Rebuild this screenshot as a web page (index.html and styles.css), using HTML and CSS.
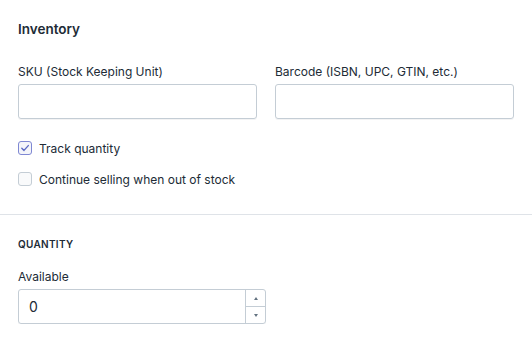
FILE: index.html
```html
<!DOCTYPE html>
<html lang="en">
  <head>
    <meta charset="utf-8" />
    <link rel="stylesheet" href="styles.css">
  </head>
  <body>
    <section class="card">
      <div class="section">
        <h2 class="heading">Inventory</h2>

        <div class="row">
          <label class="field">
            <span class="label">SKU (Stock Keeping Unit)</span>
            <span class="input"></span>
          </label>
          <label class="field">
            <span class="label">Barcode (ISBN, UPC, GTIN, etc.)</span>
            <span class="input"></span>
          </label>
        </div>

        <div class="checks">
          <div class="check">
            <span class="box checked">
              <svg width="10" height="10" viewBox="0 0 10 10">
                <path d="M1.8 5.2 L4 7.4 L8.3 2.6" fill="none" stroke="#5c6ac4" stroke-width="1.4" stroke-linecap="round" stroke-linejoin="round" />
              </svg>
            </span>
            <span class="check-text">Track quantity</span>
          </div>
          <div class="check">
            <span class="box"></span>
            <span class="check-text">Continue selling when out of stock</span>
          </div>
        </div>
      </div>

      <div class="section bottom">
        <h3 class="subheading">Quantity</h3>
        <span class="label">Available</span>
        <div class="number">
          <span class="value">0</span>
          <span class="spinner">
            <span class="arrow up"></span>
            <span class="arrow down"></span>
          </span>
        </div>
      </div>
    </section>
  </body>
</html>
```

FILE: styles.css
```css
body {
  margin: 0;
  background: #fff;
  color: #212b36;
  font-family: Inter, "Noto Sans", sans-serif;
  font-size: 12px;
}

.section {
  padding: 20px 18px 0;
}

.heading {
  margin: 0 0 26px;
  font-size: 13.5px;
  font-weight: 600;
  line-height: 18px;
}

.row {
  display: flex;
  gap: 18px;
}

.field {
  display: flex;
  flex-direction: column;
  width: 240px;
}

.label {
  display: block;
  line-height: 16px;
  margin-bottom: 4px;
  color: #212b36;
}

.input {
  display: block;
  height: 33px;
  border: 1px solid #c4cdd5;
  border-radius: 3px;
  box-shadow: 0 1px 0 rgba(22, 29, 37, 0.05);
}

.checks {
  margin-top: 21px;
  display: flex;
  flex-direction: column;
  gap: 15px;
}

.check {
  display: flex;
  align-items: center;
  gap: 7px;
  height: 16px;
}

.box {
  width: 12px;
  height: 12px;
  border: 1px solid #c4cdd5;
  border-radius: 3px;
  background: #f9fafb;
  display: flex;
  align-items: center;
  justify-content: center;
}

.box.checked {
  border-color: #7f88d3;
  background: #f4f5fa;
}

.bottom {
  margin-top: 27px;
  border-top: 1px solid #dfe3e8;
  padding-top: 22px;
}

.subheading {
  margin: 0 0 18px;
  font-size: 10px;
  font-weight: 600;
  letter-spacing: 0.3px;
  text-transform: uppercase;
  line-height: 14px;
}

.number {
  display: flex;
  width: 246px;
  height: 33px;
  border: 1px solid #c4cdd5;
  border-radius: 3px;
  box-shadow: 0 1px 0 rgba(22, 29, 37, 0.05);
}

.value {
  flex: 1;
  padding-left: 10px;
  line-height: 33px;
  font-size: 14px;
}

.spinner {
  width: 19px;
  border-left: 1px solid #c4cdd5;
  display: flex;
  flex-direction: column;
}

.arrow {
  flex: 1;
  display: flex;
  align-items: center;
  justify-content: center;
}

.arrow.up {
  border-bottom: 1px solid #c4cdd5;
}

.arrow::before {
  content: "";
  border-left: 2.5px solid transparent;
  border-right: 2.5px solid transparent;
}

.arrow.up::before {
  border-bottom: 3px solid #637381;
}

.arrow.down::before {
  border-top: 3px solid #637381;
}
```
